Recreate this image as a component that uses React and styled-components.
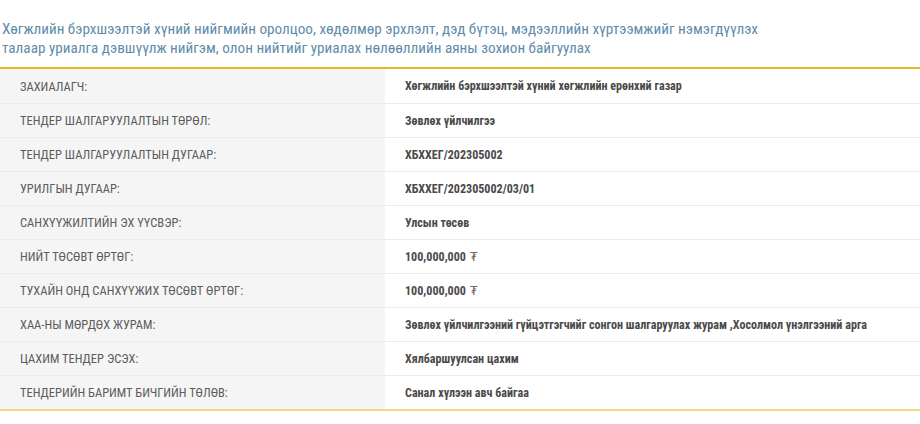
import React from "react";
import styled, { createGlobalStyle } from "styled-components";

const Global = createGlobalStyle`
  html, body { margin: 0; padding: 0; background: #fff; }
  body { font-family: "Roboto Condensed", "Liberation Sans Narrow", "Arial Narrow", "DejaVu Sans Condensed", sans-serif; }
`;

const Page = styled.div`
  width: 920px;
  padding-top: 20px;
`;

const Title = styled.h2`
  margin: 0 0 9px 2px;
  font-weight: 400;
  font-size: 15.2px;
  line-height: 19px;
  color: #5f8cab;
`;

const Table = styled.div`
  display: grid;
  grid-template-columns: 385px 1fr;
  border-top: 2px solid #e8b52c;
  border-bottom: 2px solid #f1d887;
`;

const Label = styled.div`
  background: #f5f5f5;
  height: 34px;
  display: flex;
  align-items: center;
  padding-left: 20px;
  font-size: 12.5px;
  color: #5c5c5c;
  border-top: ${(p) => (p.$first ? "none" : "1px solid #ebebeb")};
  box-sizing: border-box;
`;

const Value = styled.div`
  background: #fff;
  height: 34px;
  display: flex;
  align-items: center;
  padding-left: 20px;
  font-size: 12.1px;
  font-weight: 700;
  color: #4a4a4a;
  border-top: ${(p) => (p.$first ? "none" : "1px solid #ebebeb")};
  box-sizing: border-box;
`;

const Currency = styled.span`
  font-weight: 400;
  font-size: 13px;
  margin-left: 4px;
  color: #6a6a6a;
`;

const rows = [
  ["ЗАХИАЛАГЧ:", "Хөгжлийн бэрхшээлтэй хүний хөгжлийн ерөнхий газар"],
  ["ТЕНДЕР ШАЛГАРУУЛАЛТЫН ТӨРӨЛ:", "Зөвлөх үйлчилгээ"],
  ["ТЕНДЕР ШАЛГАРУУЛАЛТЫН ДУГААР:", "ХБХХЕГ/202305002"],
  ["УРИЛГЫН ДУГААР:", "ХБХХЕГ/202305002/03/01"],
  ["САНХҮҮЖИЛТИЙН ЭХ ҮҮСВЭР:", "Улсын төсөв"],
  ["НИЙТ ТӨСӨВТ ӨРТӨГ:", "100,000,000", true],
  ["ТУХАЙН ОНД САНХҮҮЖИХ ТӨСӨВТ ӨРТӨГ:", "100,000,000", true],
  ["ХАА-НЫ МӨРДӨХ ЖУРАМ:", "Зөвлөх үйлчилгээний гүйцэтгэгчийг сонгон шалгаруулах журам ,Хосолмол үнэлгээний арга"],
  ["ЦАХИМ ТЕНДЕР ЭСЭХ:", "Хялбаршуулсан цахим"],
  ["ТЕНДЕРИЙН БАРИМТ БИЧГИЙН ТӨЛӨВ:", "Санал хүлээн авч байгаа"],
];

export default function App() {
  return (
    <Page>
      <Global />
      <Title>
        Хөгжлийн бэрхшээлтэй хүний нийгмийн оролцоо, хөдөлмөр эрхлэлт, дэд бүтэц, мэдээллийн хүртээмжийг нэмэгдүүлэх
        <br />
        талаар уриалга дэвшүүлж нийгэм, олон нийтийг уриалах нөлөөллийн аяны зохион байгуулах
      </Title>
      <Table>
        {rows.map(([l, v, money], i) => (
          <React.Fragment key={i}>
            <Label $first={i === 0}>{l}</Label>
            <Value $first={i === 0}>
              {v}
              {money && <Currency>₮</Currency>}
            </Value>
          </React.Fragment>
        ))}
      </Table>
    </Page>
  );
}
